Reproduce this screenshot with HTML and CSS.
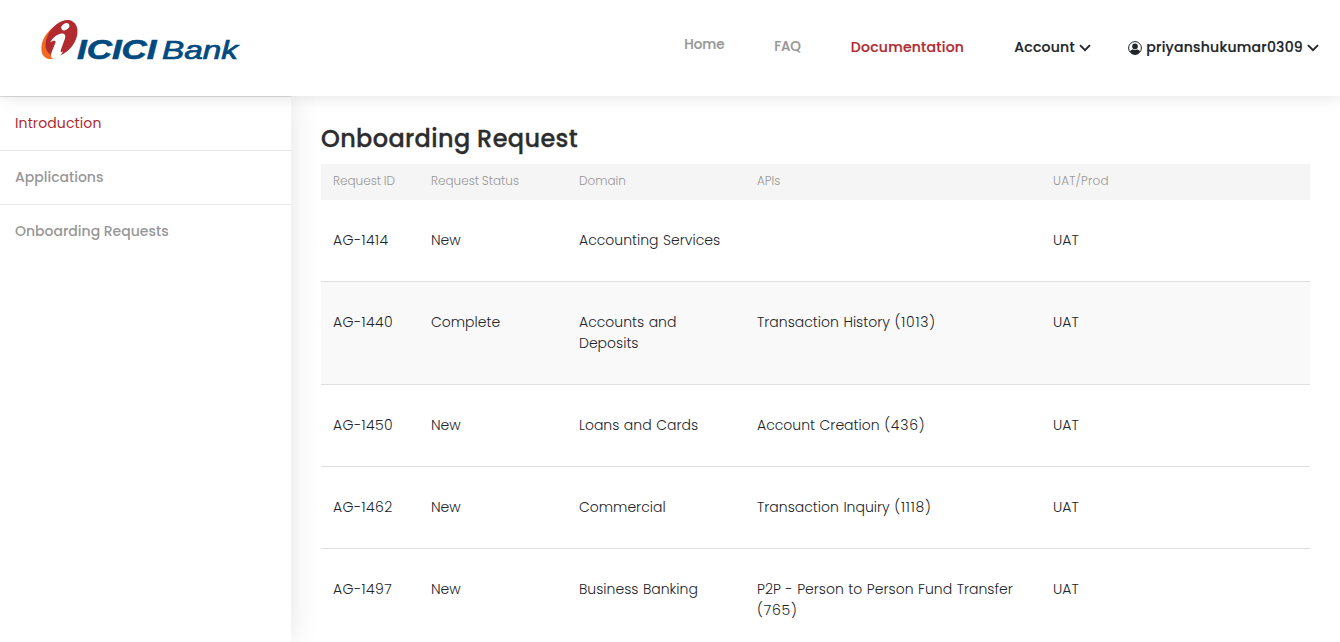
FILE: index.html
```html
<!DOCTYPE html>
<html lang="en">
<head>
<meta charset="utf-8">
<title>Onboarding Request</title>
<link rel="stylesheet" href="styles.css">
</head>
<body>
<header class="topbar">
  <a class="brand" aria-label="ICICI Bank">
    <svg width="201" height="42" viewBox="0 0 201 42">
      <ellipse cx="15.500" cy="22.500" rx="19.500" ry="12.500" transform="rotate(-55 15.500 22.500)" fill="#f26a21"/>
      <ellipse cx="20.500" cy="19" rx="20" ry="13.300" transform="rotate(-53.500 20.500 19)" fill="#b02a30"/>
      <ellipse cx="24.300" cy="7.700" rx="4.400" ry="3.100" transform="rotate(-35 24.300 7.700)" fill="#fff"/>
      <path d="M9 23.500C12 18.500 16 15 21 14.500c3.500 0 3.800 2.500 2.800 5.500l-4 11c-.6 2 .4 2.500 2.200 1.500-2.500 4.500-5 7-8.500 7.200-3.500 0-4-2.700-3-6.200l4-10c.8-2.500-2.500-2.500-5.500 0z" fill="#fff"/>
      <text class="logo-strong" x="36" y="39.500" textLength="79.500" lengthAdjust="spacingAndGlyphs">ICICI</text>
      <text class="logo-light" x="121" y="39.500" textLength="76" lengthAdjust="spacingAndGlyphs">Bank</text>
    </svg>
  </a>
  <nav class="menu">
    <a class="menu-link home">Home</a>
    <a class="menu-link faq">FAQ</a>
    <a class="menu-link current">Documentation</a>
    <a class="menu-link dark account">Account<svg class="chevron" width="12" height="8" viewBox="0 0 12 8"><path d="M1 1.200 6 6.200l5-5"/></svg></a>
    <a class="menu-link dark user"><svg class="avatar" width="14" height="14" viewBox="0 0 14 14"><circle cx="7" cy="7" r="6.400" fill="none" stroke="#212529" stroke-width="1"/><circle cx="7" cy="5.400" r="2.800" fill="#212529"/><path d="M2 10.500c.6-1.500 2-2 3-2 1.400.7 2.600.7 4 0 1 0 2.400.5 3 2A6 6 0 0 1 7 13.500a6 6 0 0 1-5-3z" fill="#212529"/></svg><span class="username">priyanshukumar0309</span><svg class="chevron" width="12" height="8" viewBox="0 0 12 8"><path d="M1 1.200 6 6.200l5-5"/></svg></a>
  </nav>
</header>
<div class="layout">
  <aside class="sidebar">
    <a class="side-link active">Introduction</a>
    <a class="side-link">Applications</a>
    <a class="side-link">Onboarding Requests</a>
  </aside>
  <main class="content">
    <h1 class="title">Onboarding Request</h1>
    <div class="row head"><span>Request ID</span><span>Request Status</span><span>Domain</span><span>APIs</span><span class="env">UAT/Prod</span></div>
    <div class="row"><span class="id">AG-1414</span><span>New</span><span>Accounting Services</span><span></span><span>UAT</span></div>
    <div class="row shaded"><span class="id">AG-1440</span><span>Complete</span><span>Accounts and<br>Deposits</span><span>Transaction History <b class="count">(1013)</b></span><span>UAT</span></div>
    <div class="row"><span class="id">AG-1450</span><span>New</span><span>Loans and Cards</span><span>Account Creation <b class="count">(436)</b></span><span>UAT</span></div>
    <div class="row"><span class="id">AG-1462</span><span>New</span><span>Commercial</span><span>Transaction Inquiry <b class="count">(1118)</b></span><span>UAT</span></div>
    <div class="row"><span class="id">AG-1497</span><span>New</span><span>Business Banking</span><span>P2P - Person to Person Fund Transfer<br><b class="count">(765)</b></span><span>UAT</span></div>
  </main>
</div>
</body>
</html>
```
FILE: styles.css
```css
* { box-sizing: border-box; }
body {
  margin: 0;
  height: 642px;
  overflow: hidden;
  background: #fff;
  color: #212529;
  font-family: Poppins, Inter, "Open Sans", sans-serif;
  font-feature-settings: "cv11";
  font-size: 14px;
  line-height: 21px;
}
.topbar {
  position: relative;
  z-index: 2;
  display: flex;
  justify-content: space-between;
  height: 96px;
  padding: 19px 21px 0 41px;
  background: #fff;
  box-shadow: 0 0 16px rgba(0, 0, 0, .13);
}
.brand svg { display: block; overflow: visible; }
.logo-strong, .logo-light { font-family: "Liberation Sans", Arial, sans-serif; font-style: italic; fill: #004a7f; }
.logo-strong { font-size: 27px; font-weight: 700; stroke: #004a7f; stroke-width: .6px; }
.logo-light { font-size: 26px; stroke: #004a7f; stroke-width: .7px; }
.menu { display: flex; align-items: flex-start; padding-top: 18px; }
.menu-link { display: flex; align-items: center; font-weight: 500; letter-spacing: .24px; white-space: nowrap; color: #979797; -webkit-text-stroke: .2px currentColor; }
.home { width: 90px; margin-top: -3px; font-size: 13.500px; letter-spacing: -.1px; }
.faq { width: 76.500px; margin-top: -1px; font-size: 13.500px; letter-spacing: -.2px; }
.current { width: 163.500px; color: #b02a30; }
.dark { color: #212529; }
.account { width: 114px; }
.chevron { margin-left: 4px; fill: none; stroke: #212529; stroke-width: 1.9; }
.avatar { margin-right: 4px; }
.layout { display: flex; height: 546px; }
.sidebar { width: 291px; border-top: 1px solid #ddd; background: #fff; box-shadow: 0 0 28px rgba(0, 0, 0, .11); }
.side-link { display: block; height: 54px; padding: 16px 15px 14px; border-bottom: 1px solid #e8e8e8; color: #979797; font-weight: 500; }
.side-link:last-child { border-bottom: 0; }
.side-link.active { color: #b02a30; font-weight: 400; letter-spacing: .12px; }
.content { width: 1049px; padding: 24px 30px 0; }
.title { margin: 0; height: 44px; font-size: 24px; line-height: 37px; font-weight: 500; letter-spacing: .36px; color: #2d2d2d; -webkit-text-stroke: .3px currentColor; }
.row { display: grid; grid-template-columns: 98px 148px 178px 296px 269px; padding: 30px 0; border-bottom: 1px solid #dedfe3; font-weight: 300; white-space: nowrap; word-spacing: .7px; }
.row > span { padding: 0 12px; }
.row > .id { letter-spacing: .4px; }
.row > .env { letter-spacing: .2px; }
.count { font-weight: 300; letter-spacing: .8px; }
.shaded { background: #f9f9f9; }
.head { height: 36px; padding: 6px 0; border: 0; background: #f5f5f5; color: #979797; font-size: 12px; word-spacing: -.5px; }
```
